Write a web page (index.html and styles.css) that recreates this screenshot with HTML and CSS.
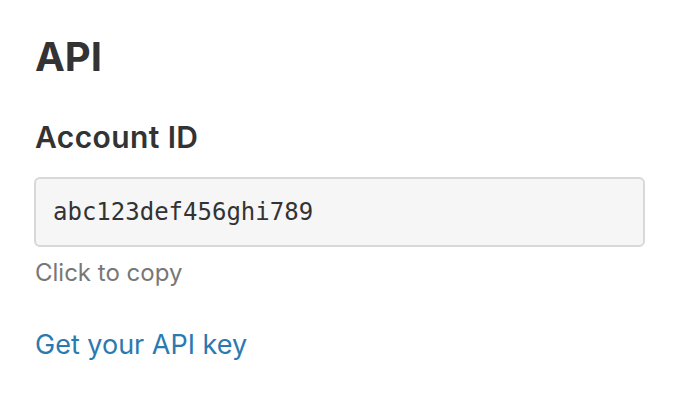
FILE: index.html
```html
<!DOCTYPE html>
<html>
<head>
<meta charset="utf-8">
<link rel="stylesheet" href="styles.css">
</head>
<body>
<div class="page">
  <h1 class="title">API</h1>
  <h2 class="label">Account ID</h2>
  <div class="field">abc123def456ghi789</div>
  <div class="help">Click to copy</div>
  <a class="link" href="#">Get your API key</a>
</div>
</body>
</html>
```

FILE: styles.css
```css
html, body {
  margin: 0;
  padding: 0;
  background: #fff;
}
.page {
  font-family: Inter, "Liberation Sans", sans-serif;
  color: #333;
  padding: 32px 45px 0 34px;
  display: flex;
  flex-direction: column;
  align-items: flex-start;
}
.title {
  margin: 0 0 0 1px;
  font-size: 40px;
  line-height: 50px;
  font-weight: 700;
}
.label {
  margin: 36px 0 0 1px;
  font-size: 30px;
  line-height: 38px;
  font-weight: 600;
  letter-spacing: 0.4px;
}
.field {
  box-sizing: border-box;
  margin-top: 21px;
  width: 611px;
  height: 70px;
  border: 2px solid #d8d8d8;
  border-radius: 6px;
  background: #f6f6f6;
  font-family: "DejaVu Sans Mono", monospace;
  font-size: 24px;
  line-height: 66px;
  padding-left: 17px;
  color: #333;
}
.help {
  margin: 10px 0 0 1px;
  font-size: 24px;
  line-height: 32px;
  color: #777;
}
.link {
  margin: 39px 0 0 1px;
  font-size: 27px;
  line-height: 34px;
  color: #2a7ab0;
  text-decoration: none;
}
```
